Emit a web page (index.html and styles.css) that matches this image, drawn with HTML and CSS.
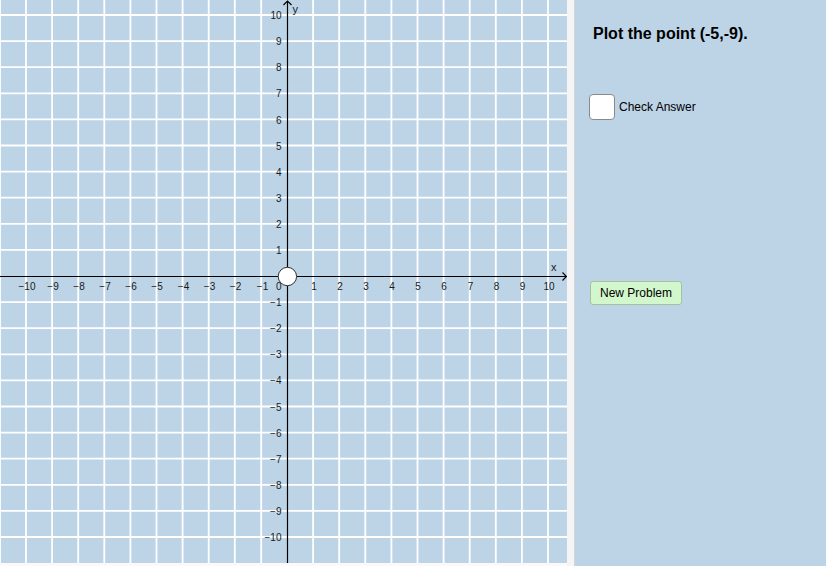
FILE: index.html
```html
<!DOCTYPE html>
<html>
<head>
<meta charset="utf-8">
<link rel="stylesheet" href="styles.css">
</head>
<body>
<div class="app">
  <div class="graph-col">
    <svg class="graph" width="567" height="563" viewBox="0 0 567 563" xmlns="http://www.w3.org/2000/svg">
      <rect x="0" y="0" width="567" height="563" class="bg"/>
      <g class="grid">
        <line x1="0" y1="0" x2="0" y2="563"/>
        <line x1="26" y1="0" x2="26" y2="563"/>
        <line x1="52.1" y1="0" x2="52.1" y2="563"/>
        <line x1="78.2" y1="0" x2="78.2" y2="563"/>
        <line x1="104.3" y1="0" x2="104.3" y2="563"/>
        <line x1="130.4" y1="0" x2="130.4" y2="563"/>
        <line x1="156.5" y1="0" x2="156.5" y2="563"/>
        <line x1="182.6" y1="0" x2="182.6" y2="563"/>
        <line x1="208.7" y1="0" x2="208.7" y2="563"/>
        <line x1="234.8" y1="0" x2="234.8" y2="563"/>
        <line x1="261.2" y1="0" x2="261.2" y2="563"/>
        <line x1="313.1" y1="0" x2="313.1" y2="563"/>
        <line x1="339.2" y1="0" x2="339.2" y2="563"/>
        <line x1="365.3" y1="0" x2="365.3" y2="563"/>
        <line x1="391.4" y1="0" x2="391.4" y2="563"/>
        <line x1="417.5" y1="0" x2="417.5" y2="563"/>
        <line x1="443.6" y1="0" x2="443.6" y2="563"/>
        <line x1="469.7" y1="0" x2="469.7" y2="563"/>
        <line x1="495.8" y1="0" x2="495.8" y2="563"/>
        <line x1="521.9" y1="0" x2="521.9" y2="563"/>
        <line x1="548" y1="0" x2="548" y2="563"/>

        <line x1="0" y1="15" x2="567" y2="15"/>
        <line x1="0" y1="41.1" x2="567" y2="41.1"/>
        <line x1="0" y1="67.2" x2="567" y2="67.2"/>
        <line x1="0" y1="93.3" x2="567" y2="93.3"/>
        <line x1="0" y1="119.4" x2="567" y2="119.4"/>
        <line x1="0" y1="145.5" x2="567" y2="145.5"/>
        <line x1="0" y1="171.6" x2="567" y2="171.6"/>
        <line x1="0" y1="197.7" x2="567" y2="197.7"/>
        <line x1="0" y1="223.8" x2="567" y2="223.8"/>
        <line x1="0" y1="249.9" x2="567" y2="249.9"/>
        <line x1="0" y1="302.1" x2="567" y2="302.1"/>
        <line x1="0" y1="328.2" x2="567" y2="328.2"/>
        <line x1="0" y1="354.3" x2="567" y2="354.3"/>
        <line x1="0" y1="380.4" x2="567" y2="380.4"/>
        <line x1="0" y1="406.5" x2="567" y2="406.5"/>
        <line x1="0" y1="432.6" x2="567" y2="432.6"/>
        <line x1="0" y1="458.7" x2="567" y2="458.7"/>
        <line x1="0" y1="484.8" x2="567" y2="484.8"/>
        <line x1="0" y1="510.9" x2="567" y2="510.9"/>
        <line x1="0" y1="537" x2="567" y2="537"/>
      </g>

      <g class="axes">
        <line x1="0" y1="276.5" x2="566.5" y2="276.5"/>
        <line x1="287.5" y1="1" x2="287.5" y2="563"/>
        <polyline points="562.5,272.5 566.5,276.5 562.5,280.5"/>
        <polyline points="283.5,5 287.5,1 291.5,5"/>
      </g>

      <g class="xlabels">
        <text x="27" y="290">−10</text>
        <text x="53" y="290">−9</text>
        <text x="79" y="290">−8</text>
        <text x="105" y="290">−7</text>
        <text x="131" y="290">−6</text>
        <text x="157" y="290">−5</text>
        <text x="183.5" y="290">−4</text>
        <text x="209.5" y="290">−3</text>
        <text x="235.5" y="290">−2</text>
        <text x="262.5" y="290">−1</text>
        <text x="314" y="290">1</text>
        <text x="340" y="290">2</text>
        <text x="366" y="290">3</text>
        <text x="392" y="290">4</text>
        <text x="418" y="290">5</text>
        <text x="444" y="290">6</text>
        <text x="470.5" y="290">7</text>
        <text x="496.5" y="290">8</text>
        <text x="522.5" y="290">9</text>
        <text x="549" y="290">10</text>
      </g>

      <g class="ylabels">
        <text x="281.5" y="19">10</text>
        <text x="281.5" y="45">9</text>
        <text x="281.5" y="71">8</text>
        <text x="281.5" y="97">7</text>
        <text x="281.5" y="123.5">6</text>
        <text x="281.5" y="149.5">5</text>
        <text x="281.5" y="175.5">4</text>
        <text x="281.5" y="201.5">3</text>
        <text x="281.5" y="227.5">2</text>
        <text x="281.5" y="254">1</text>
        <text x="281.5" y="306">−1</text>
        <text x="281.5" y="332">−2</text>
        <text x="281.5" y="358">−3</text>
        <text x="281.5" y="384">−4</text>
        <text x="281.5" y="410.5">−5</text>
        <text x="281.5" y="436.5">−6</text>
        <text x="281.5" y="462.5">−7</text>
        <text x="281.5" y="488.5">−8</text>
        <text x="281.5" y="514.5">−9</text>
        <text x="281.5" y="541">−10</text>
      </g>

      <text class="origin-label" x="276" y="290">0</text>
      <text class="axis-name" x="292.5" y="13">y</text>
      <text class="axis-name" x="551" y="271">x</text>

      <circle class="point" cx="287.4" cy="276.5" r="9.2"/>
    </svg>
  </div>
  <div class="separator"></div>
  <div class="panel">
    <h1 class="prompt">Plot the point (-5,-9).</h1>
    <label class="check-row">
      <span class="checkbox"></span>
      <span class="check-text">Check Answer</span>
    </label>
    <button class="new-btn">New Problem</button>
  </div>
</div>
</body>
</html>
```

FILE: styles.css
```css
html, body {
  margin: 0;
  padding: 0;
  background: #ffffff;
  font-family: "Liberation Sans", Arial, sans-serif;
}

.app {
  display: flex;
  width: 826px;
  height: 566px;
  overflow: hidden;
}

.graph-col {
  width: 567px;
  height: 566px;
  background: #fafafa;
  flex: none;
}

.graph {
  display: block;
}

.graph .bg {
  fill: #bdd4e7;
}

.grid line {
  stroke: #ffffff;
  stroke-width: 1.8;
}

.axes line,
.axes polyline {
  stroke: #000000;
  stroke-width: 1.2;
  fill: none;
}

.xlabels text {
  font-family: "Liberation Sans", Arial, sans-serif;
  font-size: 10px;
  fill: #1a1a1a;
  text-anchor: middle;
}

.ylabels text {
  font-family: "Liberation Sans", Arial, sans-serif;
  font-size: 10px;
  fill: #1a1a1a;
  text-anchor: end;
}

.origin-label {
  font-family: "Liberation Sans", Arial, sans-serif;
  font-size: 10px;
  fill: #1a1a1a;
}

.axis-name {
  font-family: "Liberation Sans", Arial, sans-serif;
  font-size: 11px;
  fill: #1a1a1a;
}

.point {
  fill: #ffffff;
  stroke: #333333;
  stroke-width: 1;
}

.separator {
  flex: none;
  width: 7px;
  height: 566px;
  background: #f5f5f5;
  border-right: 1px solid #d4d4d4;
}

.panel {
  flex: none;
  width: 251px;
  height: 566px;
  background: #bdd4e7;
  display: flex;
  flex-direction: column;
  align-items: flex-start;
  padding: 0 0 0 14px;
  box-sizing: border-box;
}

.prompt {
  margin: 25px 0 0 4px;
  font-size: 16px;
  font-weight: bold;
  color: #000000;
  line-height: 18px;
}

.check-row {
  display: flex;
  align-items: center;
  margin-top: 51px;
  gap: 4px;
}

.checkbox {
  width: 24px;
  height: 24px;
  background: #ffffff;
  border: 1.5px solid #8a8a8a;
  border-radius: 4px;
}

.check-text {
  font-size: 12px;
  color: #000000;
}

.new-btn {
  margin-top: 161px;
  margin-left: 1px;
  width: 92px;
  height: 24px;
  padding: 0;
  background: #d2f7cc;
  border: 1px solid #a7bfa3;
  border-radius: 3px;
  font-family: "Liberation Sans", Arial, sans-serif;
  font-size: 12px;
  color: #000000;
}
```
